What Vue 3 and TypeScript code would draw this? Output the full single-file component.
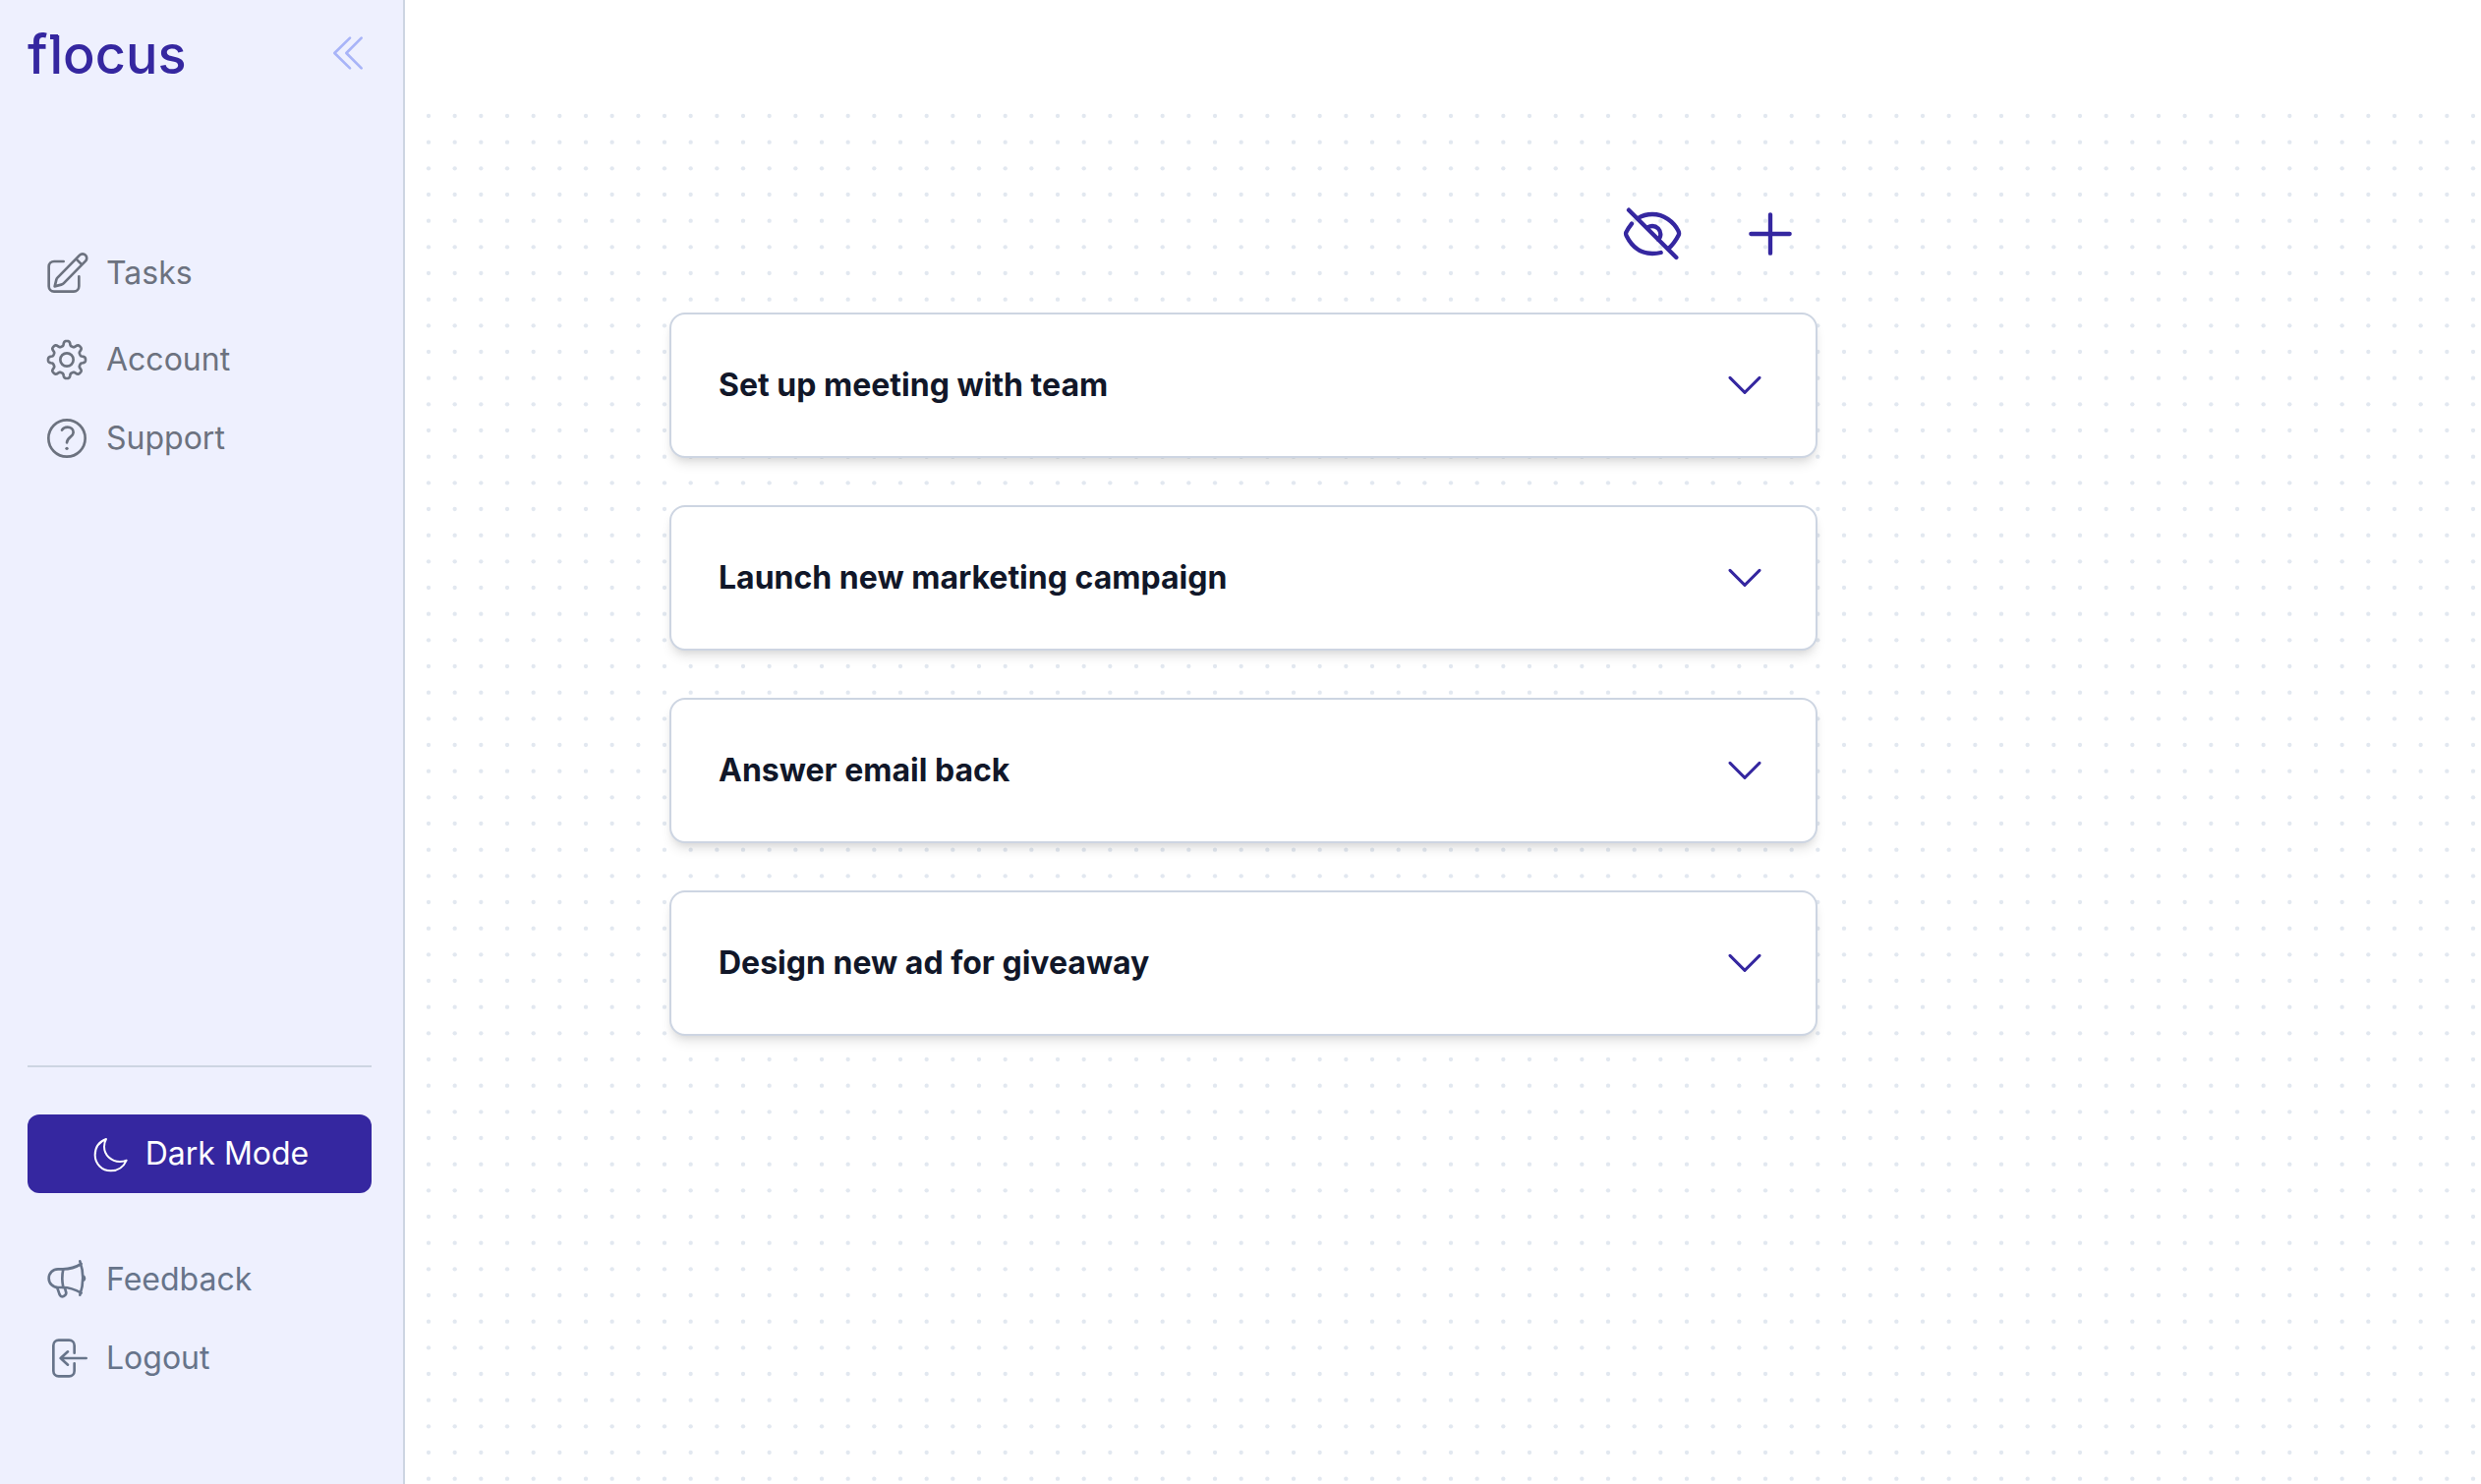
<script setup lang="ts">
import { ref } from 'vue'

interface Task {
  id: number
  title: string
}

const tasks = ref<Task[]>([
  { id: 1, title: 'Set up meeting with team' },
  { id: 2, title: 'Launch new marketing campaign' },
  { id: 3, title: 'Answer email back' },
  { id: 4, title: 'Design new ad for giveaway' },
])

// Outline of an eight-toothed cog centred in a 144-unit box.
function gearPath(): string {
  const steps = 192
  const points: string[] = []
  for (let i = 0; i < steps; i++) {
    const a = (i / steps) * Math.PI * 2
    const r = 50 + (7 * Math.tanh(2 * Math.cos(8 * a))) / Math.tanh(2)
    points.push(`${(72 + r * Math.cos(a)).toFixed(1)} ${(72 + r * Math.sin(a)).toFixed(1)}`)
  }
  return `M${points.join('L')}Z`
}

const gear = gearPath()
</script>

<template>
  <div class="app">
    <aside class="sidebar">
      <header class="brand">
        <a class="logo" href="#">f<span class="flag">l</span>ocus</a>
        <button class="icon-button collapse" type="button" aria-label="Collapse sidebar">
          <svg class="icon" viewBox="0 0 144 144"><path d="M78 26 31 72l47 46M113 26 67 72l46 46" /></svg>
        </button>
      </header>

      <nav class="nav main-nav" aria-label="Main">
        <a class="nav-item tasks-link" href="#">
          <svg class="icon" viewBox="0 0 144 144">
            <path d="M62 36H33a16 16 0 0 0-16 16v60a16 16 0 0 0 16 16h60a16 16 0 0 0 16-16V82" />
            <path d="M35 112l5-20q1-4 4-7l67-68a12 12 0 0 1 18 18L62 103q-3 3-7 4ZM100 28l18 18" />
          </svg>
          Tasks
        </a>
        <a class="nav-item" href="#">
          <svg class="icon" viewBox="0 0 144 144">
            <path :d="gear" />
            <circle cx="72" cy="72" r="20" />
          </svg>
          Account
        </a>
        <a class="nav-item" href="#">
          <svg class="icon" viewBox="0 0 144 144">
            <circle cx="72" cy="72" r="56" />
            <path d="M57 47c3-5 9-9 17-9 10 0 18 6 18 16 0 14-19 14-20 31" />
            <circle class="dot" cx="72" cy="103" r="5" />
          </svg>
          Support
        </a>
      </nav>

      <div class="bottom">
        <hr class="divider" />
        <button class="mode-button" type="button">
          <svg class="icon moon" viewBox="0 0 144 144">
            <path d="M60 27C39 35 26 53 26 76c0 27 22 48 48 48 22 0 40-13 48-32-6 3-13 4-20 4-27 0-48-21-48-46 0-8 2-16 6-23Z" />
          </svg>
          Dark Mode
        </button>
        <nav class="nav slate" aria-label="Session">
          <a class="nav-item" href="#">
            <svg class="icon" viewBox="0 0 144 144">
              <path d="M60 40H45a28 28 0 0 0 0 56h15M61 40q-6 28 0 56" />
              <path d="M60 40c20 0 40-6 56-16M60 96c20 0 40 8 56 17M112 16c12 34 12 68 0 103M121 60q10 8 0 16" />
              <path d="M43 98l7 20q4 8 12 5t8-11l-4-14" />
            </svg>
            Feedback
          </a>
          <a class="nav-item" href="#">
            <svg class="icon" viewBox="0 0 144 144">
              <path d="M95 56V33a16 16 0 0 0-16-16H47a16 16 0 0 0-16 16v78a16 16 0 0 0 16 16h32a16 16 0 0 0 16-16V88" />
              <path d="M131 72H53M75 52 53 72l22 20" />
            </svg>
            Logout
          </a>
        </nav>
      </div>
    </aside>

    <main class="board">
      <div class="column">
        <div class="toolbar">
          <button class="icon-button" type="button" aria-label="Hide completed tasks">
            <svg class="icon large" viewBox="0 0 216 216">
              <path d="M36 35 181 180" />
              <path d="M64 60c13-8 28-12 44-12 35 0 64 22 79 50q4 8 1 14c-8 16-17 29-31 41" />
              <path d="M45 77c-7 9-12 15-17 26q-2 5 1 11c16 32 43 54 79 54 9 0 18-1 26-3" />
              <path d="M94 88c5-3 9-4 14-4 14 0 25 11 25 25 0 7-3 13-7 16" />
            </svg>
          </button>
          <button class="icon-button" type="button" aria-label="Add task">
            <svg class="icon large" viewBox="0 0 216 216"><path d="M108 49v118M49 108h118" /></svg>
          </button>
        </div>

        <ul class="cards">
          <li v-for="task in tasks" :key="task.id" class="card">
            <h2 class="title">{{ task.title }}</h2>
            <button class="icon-button" type="button" :aria-label="`Expand ${task.title}`">
              <svg class="icon chevron" viewBox="0 0 144 144"><path d="M27 49 72 94l45-45" /></svg>
            </button>
          </li>
        </ul>
      </div>
    </main>
  </div>
</template>

<style>
body {
  margin: 0;
  background: #fff;
}
</style>

<style scoped>
.app {
  display: flex;
  min-height: 100vh;
  font-family: Inter, 'Liberation Sans', sans-serif;
  font-size: 32px;
  line-height: 48px;
  color: #111729;
}

.sidebar {
  box-sizing: border-box;
  display: flex;
  flex-direction: column;
  flex: 0 0 412px;
  padding: 24px 32px 88px 28px;
  border-right: 2px solid #cdd5e2;
  background: #eef0fe;
}

.brand {
  display: flex;
  align-items: center;
  justify-content: space-between;
  height: 60px;
}

.logo {
  padding-top: 4px;
  color: #3527a0;
  font-size: 54px;
  font-weight: 500;
  line-height: 60px;
  text-decoration: none;
}

/* The wordmark's "l" carries a short bar at its top left. */
.flag {
  position: relative;
  margin-left: 2px;
}

.flag::before {
  content: '';
  position: absolute;
  top: 12px;
  left: 0;
  width: 8px;
  height: 5px;
  background: currentColor;
}

.icon-button {
  display: flex;
  padding: 0;
  border: 0;
  background: none;
  color: #3527a0;
  cursor: pointer;
}

.collapse {
  color: #a8b4f8;
}

.icon {
  flex: none;
  width: 48px;
  height: 48px;
  fill: none;
  stroke: currentColor;
  stroke-width: 8;
  stroke-linecap: round;
  stroke-linejoin: round;
}

.dot {
  fill: currentColor;
  stroke: none;
}

.moon {
  stroke-width: 6;
}

.chevron {
  stroke-width: 9;
}

.large {
  width: 72px;
  height: 72px;
  stroke-width: 13;
}

.nav {
  display: flex;
  flex-direction: column;
  color: #6c727f;
}

.main-nav {
  margin: 154px 0 auto;
}

.slate {
  color: #67748a;
}

.nav-item {
  display: flex;
  align-items: center;
  gap: 16px;
  padding: 16px;
  color: inherit;
  text-decoration: none;
}

.tasks-link {
  margin-bottom: 8px;
}

.divider {
  height: 2px;
  margin: 48px 0;
  border: 0;
  background: #cdd5e2;
}

.mode-button {
  display: flex;
  align-items: center;
  justify-content: center;
  gap: 12px;
  width: 100%;
  height: 80px;
  margin-bottom: 48px;
  padding: 0 4px 0 0;
  border: 0;
  border-radius: 12px;
  background: #3527a0;
  color: #fff;
  font: inherit;
  cursor: pointer;
}

.board {
  flex: 1;
  min-width: 0;
  margin-top: 106px;
  padding: 96px 24px 48px 269px;
  background-image: url("data:image/svg+xml,%3Csvg xmlns='http://www.w3.org/2000/svg' width='80' height='80' viewBox='0 0 240 240' fill='%23e2e8f0'%3E%3Ccircle cx='72' cy='36' r='6.5'/%3E%3Ccircle cx='152' cy='36' r='6.5'/%3E%3Ccircle cx='232' cy='36' r='6.5'/%3E%3Ccircle cx='72' cy='116' r='6.5'/%3E%3Ccircle cx='152' cy='116' r='6.5'/%3E%3Ccircle cx='232' cy='116' r='6.5'/%3E%3Ccircle cx='72' cy='196' r='6.5'/%3E%3Ccircle cx='152' cy='196' r='6.5'/%3E%3Ccircle cx='232' cy='196' r='6.5'/%3E%3C/svg%3E");
  background-size: 80px 80px;
}

.column {
  max-width: 1168px;
}

.toolbar {
  display: flex;
  justify-content: flex-end;
  gap: 48px;
  padding-right: 12px;
}

.cards {
  display: flex;
  flex-direction: column;
  gap: 48px;
  margin: 44px 0 0;
  padding: 0;
  list-style: none;
}

.card {
  display: flex;
  align-items: center;
  justify-content: space-between;
  padding: 48px;
  border: 2px solid #cdd5e2;
  border-radius: 16px;
  background: #fff;
  box-shadow: 0 8px 12px -2px rgb(0 0 0 / 10%), 0 4px 8px -4px rgb(0 0 0 / 10%);
}

.title {
  margin: 0;
  font-size: 32px;
  font-weight: 700;
  line-height: 48px;
}
</style>
